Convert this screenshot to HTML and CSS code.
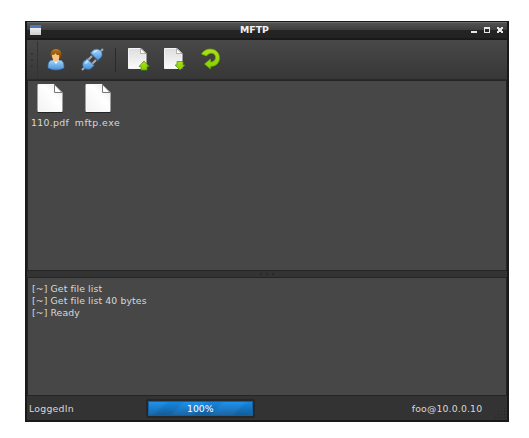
FILE: index.html
```
<!DOCTYPE html>
<html lang="en">
<head>
<meta charset="utf-8">
<title>MFTP</title>
<link rel="stylesheet" href="styles.css">
</head>
<body>
<svg class="defs" width="0" height="0" aria-hidden="true">
  <defs>
    <linearGradient id="paper" x1="0" y1="1" x2="1" y2="0"><stop offset="0" stop-color="#f2f2f2"/><stop offset=".6" stop-color="#fff"/><stop offset="1" stop-color="#e4e4e4"/></linearGradient>
    <linearGradient id="toolpaper" x1="0" y1="0" x2="0" y2="1"><stop offset="0" stop-color="#dedede"/><stop offset="1" stop-color="#fbfbfb"/></linearGradient>
    <linearGradient id="blue" x1="0" y1="0" x2="0" y2="1"><stop offset="0" stop-color="#a9d7fa"/><stop offset="1" stop-color="#4590dc"/></linearGradient>
    <linearGradient id="hair" x1="0" y1="0" x2="0" y2="1"><stop offset="0" stop-color="#c27a18"/><stop offset="1" stop-color="#5f2c05"/></linearGradient>
    <linearGradient id="green" x1="0" y1="0" x2="0" y2="1"><stop offset="0" stop-color="#b0e018"/><stop offset="1" stop-color="#82d000"/></linearGradient>
  </defs>
</svg>
<main class="window">
  <header class="titlebar">
    <span class="app-icon"></span>
    <h1>MFTP</h1>
    <svg class="controls" width="33" height="7" viewBox="0 0 33 7" shape-rendering="crispEdges">
      <path fill="#e6e6e3" d="M0 4h6v2H0zM13 0h6v6h-6zM26 0h2v1h2V0h2v2h-1v2h1v2h-2V5h-2v1h-2V4h1V2h-1z"/>
      <path fill="#292929" d="M14 2h4v3h-4z"/>
    </svg>
  </header>
  <nav class="toolbar">
    <span class="grip"><i></i><i></i><i></i></span>
    <svg class="user" width="18" height="23" viewBox="0 0 18 23">
      <path d="M1 20c0-5 1-8 5-8h6c4 0 5 3 5 8q-8 4-16 0z" fill="url(#blue)" stroke="#3474b4" stroke-width=".6"/>
      <path d="M6 12l3 4 3-4z" fill="#fff"/>
      <path d="M3.500 7c0-8 11-8 11 0l-1 5H4.500z" fill="url(#hair)"/>
      <path d="M5 7c2 0 3-1 4-2 0 2 1 2 3 2 1 4-1 7-3 7s-4-3-4-7z" fill="#f6c485"/>
    </svg>
    <svg class="plug" width="23" height="23" viewBox="0 0 23 23">
      <path d="M1 22l4-4M18 5l4-4" stroke="#a9a9a9" stroke-width="2"/>
      <path d="M7 12l4-4M11 16l4-4" stroke="#aaa" stroke-width="2"/>
      <path d="M2.500 19.500C1 16 2 13 5 12l1-1.500 7 7-1.500 1.500c-2 3-6 3-9 .5z" fill="url(#blue)" stroke="#3474b4" stroke-width=".7"/>
      <path d="M9.500 5L11 3.500c2-3 6-3 9-.5 2 3 1 7-2 8L17 12.500z" fill="url(#blue)" stroke="#3474b4" stroke-width=".7"/>
      <path d="M4.500 15.500L7 13M12.500 4.500l3.500-2" stroke="#d5eeff" stroke-width="1.100"/>
    </svg>
    <span class="divider"></span>
    <svg class="upload" width="22" height="24" viewBox="0 0 22 24">
      <path d="M.5 1.500H13l5 5v15H.5z" fill="url(#toolpaper)" stroke="#f4f4f4"/>
      <path d="M12.500 1.500v5H18z" fill="#fff" stroke="#a0a0a0" stroke-width=".8"/>
      <path d="M16 14l5 5.500h-2V23h-6v-3.500h-2z" fill="url(#green)" stroke="#559b00" stroke-width=".8"/>
    </svg>
    <svg class="download" width="22" height="24" viewBox="0 0 22 24">
      <path d="M.5 1.500H13l5 5v15H.5z" fill="url(#toolpaper)" stroke="#f4f4f4"/>
      <path d="M12.500 1.500v5H18z" fill="#fff" stroke="#a0a0a0" stroke-width=".8"/>
      <path d="M13 14.500h6v3.500h2l-5 5-5-5h2z" fill="url(#green)" stroke="#559b00" stroke-width=".8"/>
    </svg>
    <svg class="refresh" width="20" height="22" viewBox="0 0 20 22">
      <path d="M.5 6C5-2 18.500 0 18.500 10c0 5-4 8.500-9 8.500V21l-6-5 6-5v3c3 0 5-2 5-4.500 0-5-6-6-9-1.500z" fill="url(#green)" stroke="#6ca900" stroke-width=".7"/>
    </svg>
  </nav>
  <section class="files">
    <figure class="pdf">
      <svg width="26" height="29" viewBox="0 0 26 29"><path d="M1 .5h16l8 8v19H1z" fill="url(#paper)" stroke="#f8f8f8"/><path d="M.5 28.500h25" stroke="#242424"/><path d="M17.500 .5v8H25z" fill="#fff" stroke="#777"/></svg>
      <figcaption>110.pdf</figcaption>
    </figure>
    <figure class="exe">
      <svg width="26" height="29" viewBox="0 0 26 29"><path d="M1 .5h16l8 8v19H1z" fill="url(#paper)" stroke="#f8f8f8"/><path d="M.5 28.500h25" stroke="#242424"/><path d="M17.500 .5v8H25z" fill="#fff" stroke="#777"/></svg>
      <figcaption>mftp.exe</figcaption>
    </figure>
  </section>
  <div class="splitter"><i></i><i></i><i></i></div>
  <section class="log">
    <p>[~] Get file list</p>
    <p>[~] Get file list 40 bytes</p>
    <p>[~] Ready</p>
  </section>
  <footer class="status">
    <span class="state">LoggedIn</span>
    <div class="progress"><span>100%</span></div>
    <span class="host">foo@10.0.0.10</span>
    <svg width="12" height="12" viewBox="0 0 12 12" fill="#252525" shape-rendering="crispEdges"><path d="M9 0h1v1H9zM6 3h1v1H6zM9 3h1v1H9zM3 6h1v1H3zM6 6h1v1H6zM9 6h1v1H9zM0 9h1v1H0zM3 9h1v1H3zM6 9h1v1H6zM9 9h1v1H9z"/></svg>
  </footer>
</main>
</body>
</html>
```

FILE: styles.css
```
* { box-sizing: border-box; }
body {
  margin: 0;
  padding: 21px 20px 16px 25px;
  background: #fff;
  color: #d8d8d6;
  font: 9.33px/12px "DejaVu Sans", sans-serif;
}
h1, p, figure { margin: 0; }
svg { display: block; flex: none; }
.defs { position: absolute; }
.window {
  width: 484px;
  height: 401px;
  display: flex;
  flex-direction: column;
  border: solid #191919;
  border-width: 1px 2px 2px;
  background: #333;
}
.titlebar {
  height: 18px;
  flex: none;
  display: grid;
  grid-template-columns: 12px 1fr 33px;
  padding: 0 3px;
  border-top: 1px solid #696969;
  border-bottom: 2px solid #191919;
  background: linear-gradient(#505050, #3e3e3e 7px, #242424 7px, #222);
}
.app-icon {
  width: 11px;
  height: 10px;
  margin-top: 2px;
  border-top: 3px solid #4d79b6;
  background: linear-gradient(#eee, #ccc);
}
h1 {
  padding: 1px 4px 0 0;
  text-align: center;
  color: #f2f2f0;
  font-size: 9.33px;
  line-height: 12px;
}
.controls { margin-top: 4px; }
.toolbar {
  height: 40px;
  flex: none;
  display: flex;
  align-items: flex-start;
  padding-top: 1px;
  border-bottom: 1px solid #292929;
  background: linear-gradient(#484848, #373737);
}
.grip {
  width: 11px;
  height: 38px;
  display: flex;
  flex-direction: column;
  align-items: center;
  justify-content: center;
  gap: 4px;
  border-right: 1px solid #333;
}
.grip i { width: 2px; height: 2px; background: #333; }
.user { margin: 7px 0 0 9px; }
.plug { margin: 7px 0 0 16px; }
.divider { width: 1px; height: 24px; margin: 7px 0 0 11px; background: #2a2a2a; }
.upload { margin: 6px 0 0 12px; }
.download { margin: 6px 0 0 14px; }
.refresh { margin: 7px 0 0 15px; }
.files {
  height: 191px;
  flex: none;
  display: flex;
  padding: 3px 2px;
  border: 1px solid #252525;
  background: #474747;
}
figure {
  display: flex;
  flex-direction: column;
  align-items: center;
  gap: 4px;
}
.pdf { width: 40px; letter-spacing: .3px; }
.exe { width: 49px; margin-left: 3px; letter-spacing: .5px; }
.splitter {
  height: 6px;
  flex: none;
  display: flex;
  justify-content: center;
  align-items: center;
  gap: 4px;
}
.splitter i { width: 2px; height: 2px; background: #292929; }
.log {
  height: 119px;
  flex: none;
  padding: 5px 4px;
  border: 1px solid #252525;
  background: #474747;
  letter-spacing: .1px;
}
.status {
  flex: 1;
  display: flex;
  align-items: flex-start;
  padding-left: 2px;
  background: #333;
}
.state { width: 118px; padding-top: 7px; letter-spacing: .25px; }
.progress {
  width: 110px;
  height: 19px;
  margin-top: 3px;
  border: 2px solid #272727;
  border-radius: 2px;
  background:
    repeating-linear-gradient(135deg, #ffffff08 0 12px, #0000000e 16px 24px, #ffffff08 28px) padding-box,
    linear-gradient(#1593f4, #155e9b) padding-box;
  box-shadow: inset 0 0 0 1px #0b62a8;
  text-align: center;
  color: #fff;
  line-height: 15px;
}
.host { width: 83px; margin-left: 157px; padding-top: 7px; letter-spacing: .15px; }
.status svg { margin: 12px 0 0 1px; }
```
